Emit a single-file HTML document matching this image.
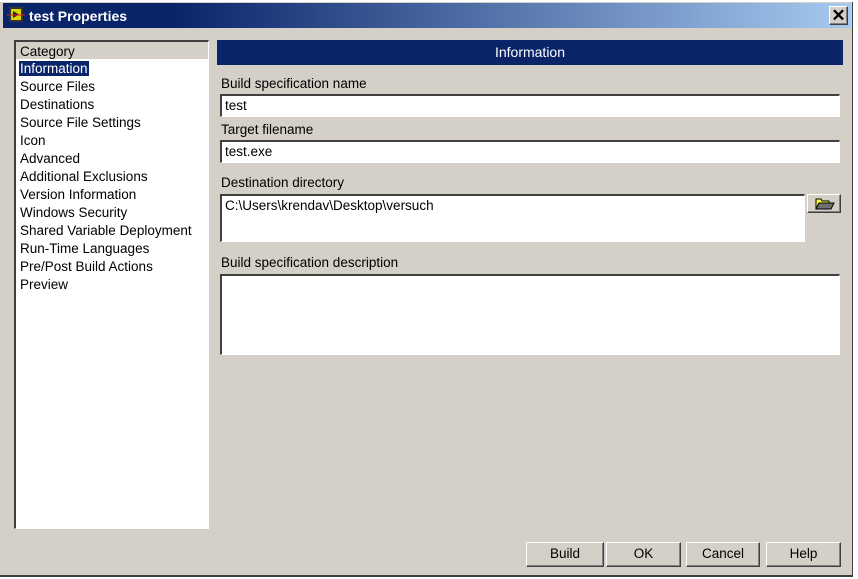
<!DOCTYPE html>
<html><head><style>
*{margin:0;padding:0;box-sizing:border-box}
body{width:858px;height:579px;background:#fff;font-family:"Liberation Sans",sans-serif;font-size:13.5px;color:#000;position:relative;overflow:hidden}
.win{position:absolute;left:-1px;top:2px;width:854px;height:575px;background:#d4d0c8;border-right:1px solid #404040;border-bottom:2px solid #404040;border-left:1px solid #fff}
.title{position:absolute;left:3px;top:1px;width:848px;height:25px;background:linear-gradient(90deg,#0a246a 0%,#0a246a 20%,#a6caf0 100%)}
.title span{position:absolute;left:26px;top:5px;color:#fff;font-weight:bold;font-size:14px}
.abs{position:absolute}
.sunk{background:#fff;border-top:2px solid #404040;border-left:2px solid #404040;border-right:1px solid #fff;border-bottom:1px solid #fff;box-shadow:1px 1px 0 #d4d0c8}
.btn{position:absolute;background:#d4d0c8;border:1px solid;border-color:#fff #404040 #404040 #fff;box-shadow:inset -1px -1px 0 #808080;text-align:center;line-height:22px}
.lbl{position:absolute;left:221px}
.list div{height:18px;line-height:18px;padding-left:4px}
</style></head><body>
<div class="win">
<div class="title">
<svg class="abs" style="left:4px;top:3px" width="18" height="18"><rect x="2" y="1" width="14" height="15" fill="#333"/><rect x="4" y="3" width="10" height="11" fill="#d8d800"/><path d="M6 5 L12 8.5 L6 12 Z" fill="#222"/><path d="M0 9 H18" stroke="#e02020" stroke-width="1"/></svg>
<span>test Properties</span>
<div class="btn" style="left:826px;top:3px;width:19px;height:19px;line-height:17px;font-size:17px;font-weight:bold">✕</div>
</div>
<div class="abs sunk list" style="left:14px;top:38px;width:195px;height:489px">
<div style="background:#d4d0c8;color:#000;height:18px;line-height:20px;border-bottom:1px solid #fff">Category</div>
<div><span style="background:#0a246a;color:#fff;padding:0 1px;margin-left:-1px">Information</span></div>
<div>Source Files</div><div>Destinations</div><div>Source File Settings</div><div>Icon</div><div>Advanced</div><div>Additional Exclusions</div><div>Version Information</div><div>Windows Security</div><div>Shared Variable Deployment</div><div>Run-Time Languages</div><div>Pre/Post Build Actions</div><div>Preview</div>
</div>
<div class="abs" style="left:217px;top:38px;width:626px;height:25px;background:#0a246a;color:#fff;text-align:center;line-height:25px;font-size:14px">Information</div>
<div class="lbl" style="top:74px">Build specification name</div>
<div class="abs sunk" style="left:220px;top:92px;width:620px;height:23px;padding:2px 3px">test</div>
<div class="lbl" style="top:120px">Target filename</div>
<div class="abs sunk" style="left:220px;top:138px;width:620px;height:23px;padding:2px 3px">test.exe</div>
<div class="lbl" style="top:173px">Destination directory</div>
<div class="abs sunk" style="left:220px;top:192px;width:585px;height:48px;padding:2px 3px">C:\Users\krendav\Desktop\versuch</div>
<div class="btn" style="left:807px;top:192px;width:34px;height:19px">
<svg class="abs" style="left:7px;top:2px" width="20" height="13"><path d="M1 2 H6 L7 4 H14 V6 H4 L1 12 Z" fill="#ffff40" stroke="#000"/><path d="M1 12 L4 6 H19 L16 12 Z" fill="#707070" stroke="#000"/></svg>
</div>
<div class="lbl" style="top:253px">Build specification description</div>
<div class="abs sunk" style="left:220px;top:272px;width:620px;height:81px"></div>
<div class="btn" style="left:526px;top:540px;width:78px;height:25px">Build</div>
<div class="btn" style="left:606px;top:540px;width:75px;height:25px">OK</div>
<div class="btn" style="left:686px;top:540px;width:74px;height:25px">Cancel</div>
<div class="btn" style="left:766px;top:540px;width:75px;height:25px">Help</div>
</div>
</body></html>
